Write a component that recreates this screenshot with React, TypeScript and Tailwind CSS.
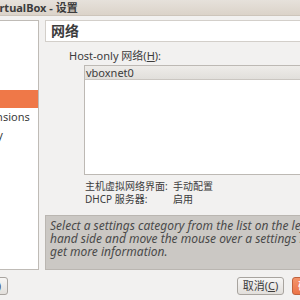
import React from 'react';

const sideItems = ['常规', '输入', '语言'];

const App: React.FC = () => {
    return (
        <div className="w-[300px] h-[300px] overflow-hidden bg-[#f2f1f0] text-[#3c3c3c] text-[11px] font-['Noto_Sans','Noto_Sans_CJK_SC',sans-serif]">
            {/* TITLE BAR */}
            <div className="h-[16px] bg-gradient-to-b from-[#e6e1db] to-[#dbd3c9] border-b border-[#cdc5bb] flex items-center">
                <span className="ml-[-11px] font-bold text-[11px] leading-none whitespace-nowrap text-[#3c3c3c]">
                    VirtualBox - 设置
                </span>
            </div>

            {/* BODY */}
            <div className="flex mt-[4px] h-[250px]">
                {/* Left category list */}
                <div className="ml-[-111px] w-[150px] shrink-0 bg-white border border-[#bfbbb6] pt-[15px]">
                    {sideItems.map((item, i) => (
                        <div key={i} className="h-[18px] flex items-center pl-[85px] whitespace-nowrap">
                            {item}
                        </div>
                    ))}
                    <div className="h-[18px] flex items-center pl-[85px] bg-[#ef7848] text-white whitespace-nowrap">
                        网络
                    </div>
                    <div className="h-[18px] flex items-center pl-[84px] whitespace-nowrap">Extensions</div>
                    <div className="h-[18px] flex items-center pl-[84px] whitespace-nowrap">Proxy</div>
                </div>

                {/* Right page */}
                <div className="ml-[6px] w-[420px] shrink-0 flex flex-col">
                    <div className="h-[22px] bg-white border border-[#d3cfca] flex items-center pl-[5px]">
                        <span className="font-bold text-[14px] leading-none">网络</span>
                    </div>

                    <div className="mt-[7px] ml-[24px] h-[14px] leading-[14px] whitespace-nowrap">
                        Host-only 网络(<span className="underline">H</span>):
                    </div>

                    <div className="mt-[2px] ml-[39px] h-[110px] bg-white border border-[#bdb9b4] flex flex-col">
                        <div className="h-[14px] bg-gradient-to-b from-[#eeece9] to-[#e1dfdb] border-b border-[#cac6c1] flex items-center pl-[1px] leading-none">
                            vboxnet0
                        </div>
                    </div>

                    <div className="mt-[5px] ml-[40px] grid grid-cols-[88px_auto] text-[10px] leading-[13px] whitespace-nowrap">
                        <span>主机虚拟网络界面:</span>
                        <span>手动配置</span>
                        <span>DHCP 服务器:</span>
                        <span>启用</span>
                    </div>

                    <div className="mt-[9px] w-[310px] h-[55px] bg-[#cbc8c4] border border-[#bab6b1] px-[4px] pt-[3px] italic text-[12px] leading-[13px] text-[#4a4a4a] whitespace-nowrap">
                        Select a settings category from the list on the left-<br />
                        hand side and move the mouse over a settings item to<br />
                        get more information.
                    </div>
                </div>
            </div>

            {/* BUTTONS */}
            <div className="flex mt-[7px] h-[18px]">
                <div className="ml-[-50px] w-[58px] shrink-0 rounded-[3px] border border-[#a8a49f] bg-gradient-to-b from-[#f7f6f5] to-[#e2dfdb] flex items-center justify-end pr-[6px] whitespace-nowrap">
                    帮助(H)
                </div>
                <div className="ml-[229px] w-[47px] shrink-0 rounded-[3px] border border-[#a8a49f] bg-gradient-to-b from-[#f7f6f5] to-[#e2dfdb] flex items-center justify-center whitespace-nowrap">
                    取消(<span className="underline">C</span>)
                </div>
                <div className="ml-[8px] w-[60px] shrink-0 rounded-[3px] border border-[#c0623d] bg-gradient-to-b from-[#f4946a] to-[#ec7447] text-white flex items-center pl-[5px] whitespace-nowrap">
                    确定(O)
                </div>
            </div>
        </div>
    );
};

export default App;
